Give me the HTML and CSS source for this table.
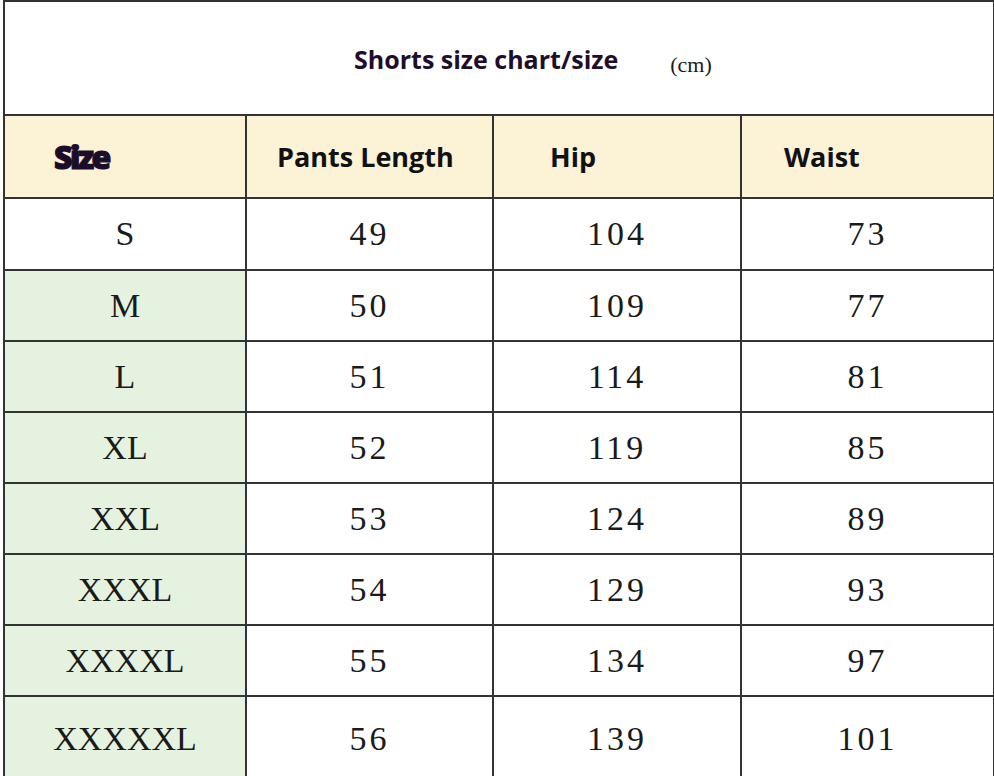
FILE: index.html
```html
<!DOCTYPE html>
<html lang="en">
<head>
<meta charset="utf-8">
<title>Shorts size chart</title>
<link rel="stylesheet" href="styles.css">
</head>
<body>
<table class="chart">
  <colgroup>
    <col class="c1"><col class="c2"><col class="c3"><col class="c4">
  </colgroup>
  <tr class="title-row">
    <td colspan="4"><span class="title">Shorts size chart/size</span><span class="unit">(cm)</span></td>
  </tr>
  <tr class="head-row">
    <th class="h-size">Size</th>
    <th class="h-len">Pants Length</th>
    <th class="h-hip">Hip</th>
    <th class="h-waist">Waist</th>
  </tr>
  <tr class="first"><td class="sz plain">S</td><td>49</td><td>104</td><td>73</td></tr>
  <tr><td class="sz">M</td><td>50</td><td>109</td><td>77</td></tr>
  <tr><td class="sz">L</td><td>51</td><td>114</td><td>81</td></tr>
  <tr><td class="sz">XL</td><td>52</td><td>119</td><td>85</td></tr>
  <tr><td class="sz">XXL</td><td>53</td><td>124</td><td>89</td></tr>
  <tr><td class="sz">XXXL</td><td>54</td><td>129</td><td>93</td></tr>
  <tr><td class="sz">XXXXL</td><td>55</td><td>134</td><td>97</td></tr>
  <tr class="last"><td class="sz">XXXXXL</td><td>56</td><td>139</td><td>101</td></tr>
</table>
</body>
</html>
```

FILE: styles.css
```css
html, body {
  margin: 0;
  padding: 0;
  background: #ffffff;
  overflow: hidden;
}

.chart {
  margin-left: 3px;
  width: 990px;
  table-layout: fixed;
  border-collapse: collapse;
  font-family: "Liberation Serif", "Times New Roman", serif;
  color: #1a1a1a;
}

.c1 { width: 242px; }
.c2 { width: 247px; }
.c3 { width: 248px; }
.c4 { width: 253px; }

.chart td, .chart th {
  border: 2px solid #333333;
  padding: 0;
}

.chart td {
  height: 69px;
  text-align: center;
  font-size: 34px;
  letter-spacing: 3px;
  background: #ffffff;
}

.chart td.sz {
  background: #e6f2e0;
  letter-spacing: 0;
}

.chart td.sz.plain {
  background: #ffffff;
}

.chart .first td {
  height: 70px;
}

.title-row td {
  height: 112px;
  text-align: left;
  letter-spacing: 0;
  padding-left: 349px;
}

.title {
  font-family: "Open Sans", "Liberation Sans", sans-serif;
  font-weight: 700;
  font-size: 25px;
  color: #1e0e2c;
}

.unit {
  font-family: "Liberation Serif", serif;
  font-size: 22px;
  color: #1a1a1a;
  margin-left: 52px;
  position: relative;
  top: 3px;
}

.head-row th {
  height: 81px;
  background: #fcf2d5;
  text-align: left;
  font-family: "Open Sans", "Liberation Sans", sans-serif;
  font-weight: 700;
  font-size: 27px;
  color: #111111;
}

.head-row th.h-size {
  padding-left: 49px;
  font-size: 32px;
  font-weight: 800;
  color: #1b0d2a;
  letter-spacing: -2.5px;
  -webkit-text-stroke: 1.2px #1b0d2a;
}
.head-row th.h-len { padding-left: 30px; }
.head-row th.h-hip { padding-left: 56px; }
.head-row th.h-waist { padding-left: 42px; }

.last td {
  height: 84px;
}
```
